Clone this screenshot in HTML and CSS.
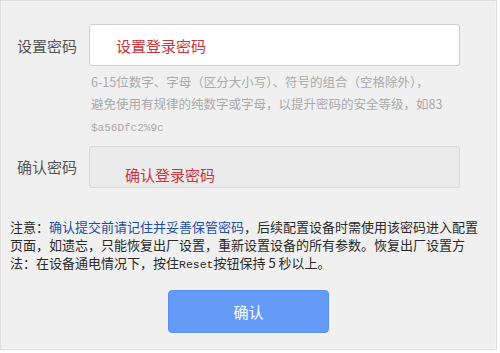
FILE: index.html
```html
<!DOCTYPE html>
<html lang="zh-CN">
<head>
<meta charset="utf-8">
<link rel="stylesheet" href="styles.css">
</head>
<body>
<div class="panel">
  <div class="row row-first">
    <label class="label">设置密码</label>
    <div class="input input-white"><span class="ph">设置登录密码</span></div>
  </div>
  <div class="hint">6-15位数字、字母（区分大小写）、符号的组合（空格除外），<br>避免使用有规律的纯数字或字母，以提升密码的安全等级，如83<br><span class="mono">$a56Dfc2%9c</span></div>
  <div class="row row-second">
    <label class="label">确认密码</label>
    <div class="input input-grey"><span class="ph ph-low">确认登录密码</span></div>
  </div>
  <div class="note">注意：<span class="link">确认提交前请记住并妥善保管密码</span>，后续配置设备时需使用该密码进入配置<br>页面，如遗忘，只能恢复出厂设置，重新设置设备的所有参数。恢复出厂设置方<br>法：在设备通电情况下，按住<span class="mono">Reset</span>按钮保持 5 秒以上。</div>
  <div class="actions"><button class="btn">确认</button></div>
</div>
</body>
</html>
```
FILE: styles.css
```css
* { box-sizing: border-box; }
html, body { margin: 0; padding: 0; background: #ffffff; }
body { font-family: "Noto Sans CJK SC", "Noto Sans", sans-serif; }
.panel {
  width: 497px;
  height: 350px;
  background: #f0f0f0;
  border: 1px solid #dedede;
  box-shadow: inset 0 0 0 1px #f6f6f6;
  padding-top: 23px;
}
.row { display: flex; align-items: center; }
.label {
  width: 88px;
  padding-left: 16px;
  font-size: 15px;
  color: #555;
}
.input {
  width: 371px;
  height: 42px;
  border: 1px solid #cfcfcf;
  border-radius: 3px;
  display: flex;
  align-items: center;
}
.input-white { background: #fff; }
.input-grey { background: #ebebeb; border-color: #d8d8d8; }
.ph { color: #c8353a; font-size: 15px; padding-left: 26px; }
.ph-low { padding-left: 35px; padding-top: 14px; }
.hint {
  margin: 5px 0 0 90px;
  font-size: 12.5px;
  line-height: 22px;
  color: #aaa;
  white-space: nowrap;
}
.hint .mono { font-size: 11px; }
.mono { font-family: "Liberation Mono", monospace; }
.row-second { margin-top: 7px; }
.row-second .label { padding-bottom: 2px; }
.note {
  margin: 30px 0 0 9px;
  font-size: 13px;
  line-height: 18px;
  color: #2a2a2a;
  white-space: nowrap;
}
.note .mono { font-size: 11.5px; }
.link { color: #1f4fa6; }
.actions { padding-left: 167px; margin-top: 16px; }
.btn {
  width: 161px;
  height: 43px;
  border: 1px solid #5a90ef;
  border-radius: 4px;
  background: #659bf8;
  color: #fff;
  font-family: inherit;
  font-size: 15px;
  padding: 0;
}
```
